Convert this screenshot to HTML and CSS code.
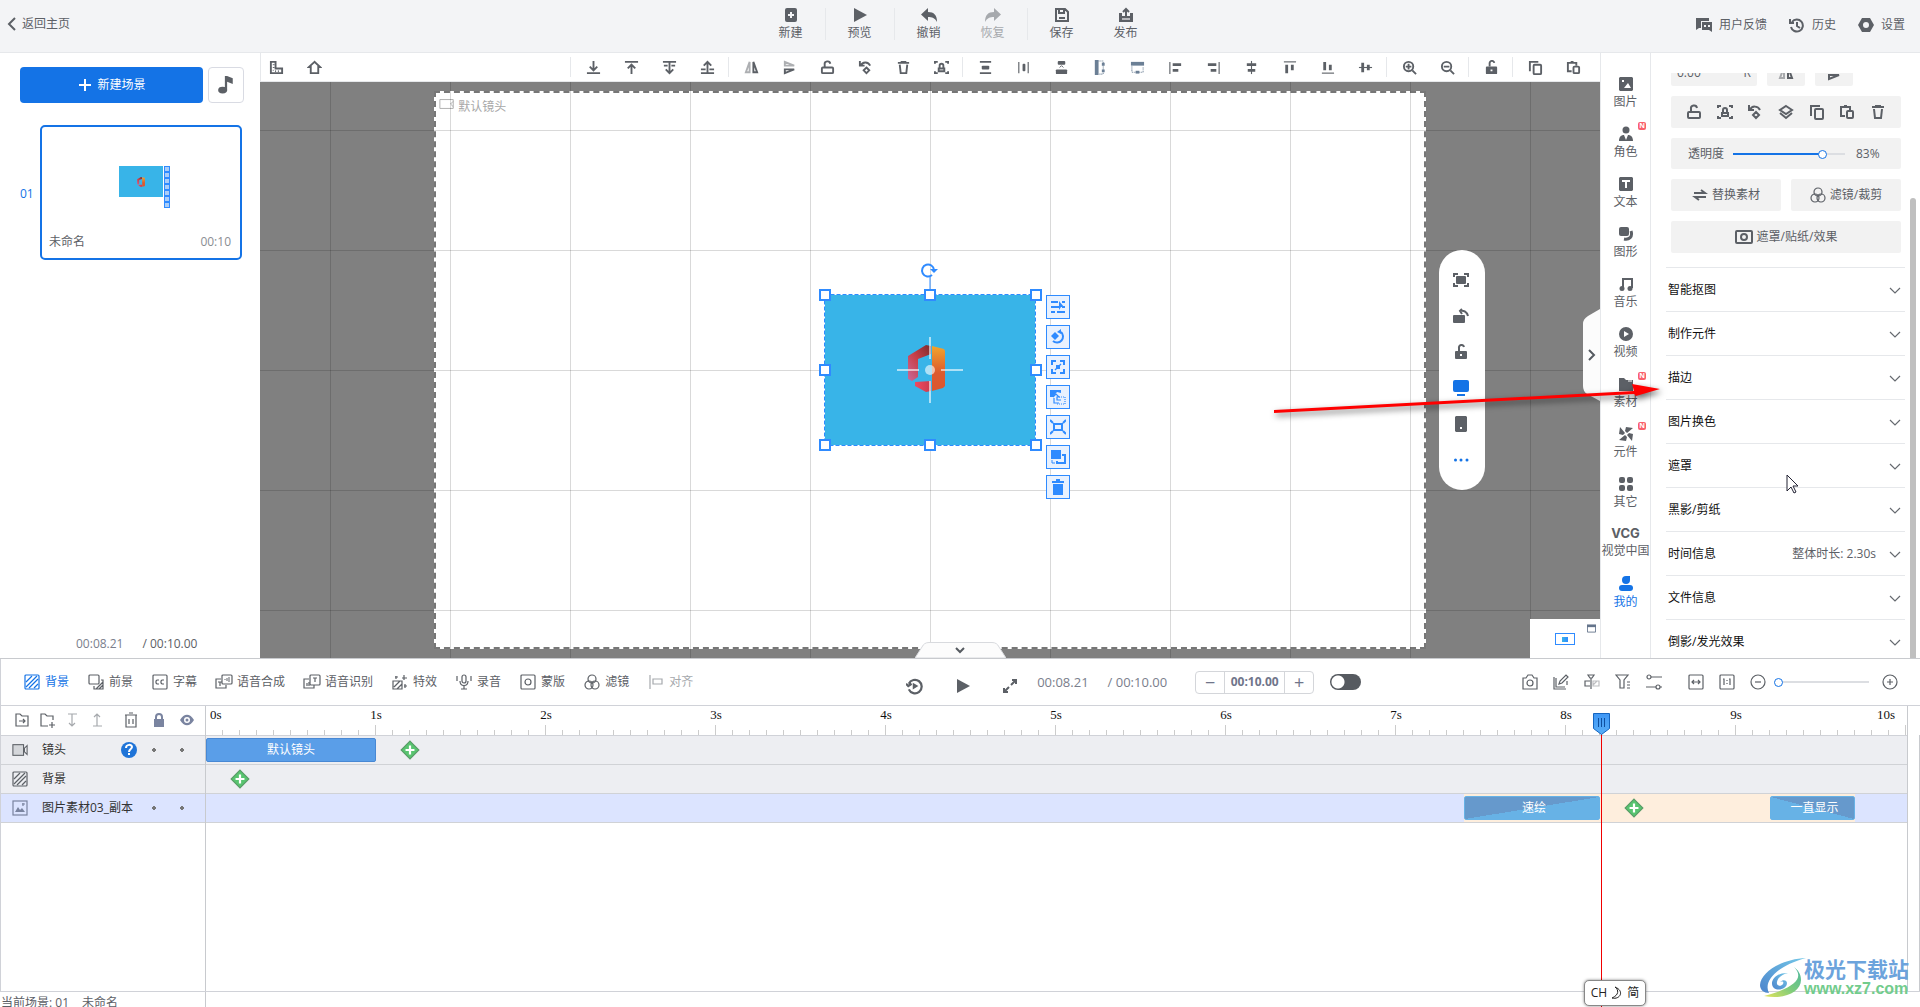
FILE: index.html
```html
<!DOCTYPE html>
<html lang="zh-CN">
<head>
<meta charset="utf-8">
<title>未命名</title>
<link rel="stylesheet" href="styles.css">
</head>
<body>
<svg class="sprite" aria-hidden="true">
<defs>
<linearGradient id="g-red" x1="1" y1="0" x2="0" y2="1"><stop offset="0" stop-color="#7a2a2c"/><stop offset=".5" stop-color="#c93f48"/><stop offset="1" stop-color="#c86a9c"/></linearGradient>
<linearGradient id="g-orange" x1="0" y1="0" x2="0" y2="1"><stop offset="0" stop-color="#f2a52c"/><stop offset=".6" stop-color="#dc5a2e"/><stop offset="1" stop-color="#dc562e"/></linearGradient>
<linearGradient id="g-pink" x1="0" y1="0" x2="1" y2="0"><stop offset="0" stop-color="#ee4a62"/><stop offset="1" stop-color="#cc3a4c"/></linearGradient>
<linearGradient id="g-sky" x1="1" y1="0" x2="0" y2="1"><stop offset="0" stop-color="#74c8e8"/><stop offset="1" stop-color="#4c84cc"/></linearGradient>
<linearGradient id="g-leaf" x1="1" y1="0" x2="0" y2="1"><stop offset="0" stop-color="#4cb8a0"/><stop offset=".5" stop-color="#7ccb7c"/><stop offset="1" stop-color="#e4e45c"/></linearGradient>
<linearGradient id="g-head" x1="0" y1="0" x2="0" y2="1"><stop offset="0" stop-color="#3f97f5"/><stop offset="1" stop-color="#58aef8"/></linearGradient>
</defs>
<symbol id="back" viewBox="0 0 16 16"><path d="M11 2L5 8l6 6" stroke-width="2"/></symbol>
<symbol id="new" viewBox="0 0 16 16"><path fill="currentColor" stroke="none" fill-rule="evenodd" d="M4 1h8a2 2 0 0 1 2 2v10a2 2 0 0 1-2 2H4a2 2 0 0 1-2-2V3a2 2 0 0 1 2-2zm3 4v2H5v2h2v2h2V9h2V7H9V5z"/></symbol>
<symbol id="play" viewBox="0 0 16 16"><path fill="currentColor" stroke="none" d="M2 1l13 7-13 7z"/></symbol>
<symbol id="undo" viewBox="0 0 16 16"><path fill="currentColor" stroke="none" d="M7 1v4c6 0 9 3 9 10-2-4-5-5-9-5v4L0 7.500z"/></symbol>
<symbol id="redo" viewBox="0 0 16 16"><path fill="currentColor" stroke="none" d="M9 1v4c-6 0-9 3-9 10 2-4 5-5 9-5v4l7-6.500z"/></symbol>
<symbol id="save" viewBox="0 0 16 16"><path d="M2 2h9l3 3v9H2zM5 2v4h5V2M5 11h6" stroke-width="2"/></symbol>
<symbol id="publish" viewBox="0 0 16 16"><path fill="currentColor" stroke="none" d="M1 6h3v3h8V6h3v9H1z"/><path d="M8 10V2M5 5l3-3 3 3" stroke-width="2"/><path d="M4 12h8" stroke="#f3f4f6"/></symbol>
<symbol id="feedback" viewBox="0 0 16 16"><path fill="currentColor" stroke="none" d="M0 1h13v3H5v7H3l-3 2z"/><path fill="currentColor" stroke="none" fill-rule="evenodd" d="M6 5h10v10l-3-2H6zm2 3v2h2V8zm4 0v2h2V8z"/></symbol>
<symbol id="history" viewBox="0 0 16 16"><path d="M3 5a6 6 0 1 1-1 5M8 5v4l3 2M1 2v4h4" stroke-width="2"/></symbol>
<symbol id="gear" viewBox="0 0 16 16"><path fill="currentColor" stroke="none" fill-rule="evenodd" d="M4 1h8l4 7-4 7H4L0 8zm4 4a3 3 0 1 0 0 6 3 3 0 0 0 0-6z"/></symbol>
<symbol id="plus" viewBox="0 0 16 16"><path d="M8 2v12M2 8h12" stroke-width="2"/></symbol>
<symbol id="note" viewBox="0 0 16 16"><ellipse cx="5" cy="12.500" rx="4" ry="3" fill="currentColor" stroke="none"/><path fill="currentColor" stroke="none" d="M7 0h2l5 2v5L9 5v8H7z"/></symbol>
<symbol id="ruler" viewBox="0 0 16 16"><path d="M2 2h5v7h7v5H2z" stroke-width="2"/><path d="M4 5h2M4 8h2M7 11v2M10 11v2M4 11h1" stroke-width="1"/></symbol>
<symbol id="home" viewBox="0 0 16 16"><path d="M8 2L2 7.500h2V14h8V7.500h2z" stroke-width="2"/></symbol>
<symbol id="to-bottom" viewBox="0 0 16 16"><path d="M8 1v9M4 7l4 4 4-4M1 14h14" stroke-width="2"/></symbol>
<symbol id="to-top" viewBox="0 0 16 16"><path d="M8 15V6M4 9l4-4 4 4M1 2h14" stroke-width="2"/></symbol>
<symbol id="down-one" viewBox="0 0 16 16"><path d="M8 3v10M4 10l4 4 4-4M1 2h14M2 6h4M10 6h4" stroke-width="2"/></symbol>
<symbol id="up-one" viewBox="0 0 16 16"><path d="M8 13V3M4 6l4-4 4 4M1 14h14M1 10h5M10 10h5" stroke-width="2"/></symbol>
<symbol id="flip-h" viewBox="0 0 16 16"><path d="M6 2v11H2z" opacity=".5" stroke-width="2"/><path d="M10 2v11h4z" stroke-width="2"/></symbol>
<symbol id="flip-v" viewBox="0 0 16 16"><path d="M3 6V2l10 4z" opacity=".5" stroke-width="2"/><path d="M3 10v4l10-4z" stroke-width="2"/></symbol>
<symbol id="unlock" viewBox="0 0 16 16"><rect x="2" y="8" width="12" height="6" rx="1" stroke-width="2"/><path d="M5 8V5a3 3 0 0 1 6-1" stroke-width="2"/></symbol>
<symbol id="unlock-fill" viewBox="0 0 16 16"><path fill="currentColor" stroke="none" fill-rule="evenodd" d="M3 7h10a1 1 0 0 1 1 1v6a1 1 0 0 1-1 1H3a1 1 0 0 1-1-1V8a1 1 0 0 1 1-1zm4 3v2h2v-2z"/><path d="M6 7V4a2.500 2.500 0 0 1 5-1" stroke-width="2"/></symbol>
<symbol id="rotate" viewBox="0 0 16 16"><path d="M3 6c2-5 8-4 10 0M2 1v5h5M9 8l3 3-3 3-3-3z" stroke-width="2"/></symbol>
<symbol id="trash" viewBox="0 0 16 16"><path d="M2 3h12M5 2h6M4 5l1 9h6l1-9" stroke-width="2"/></symbol>
<symbol id="lock-frame" viewBox="0 0 16 16"><path d="M1 4V2h3M12 2h3v2M1 12v2h3M15 12v2h-3M5 12V9h6v3zM6 8V6a2 2 0 0 1 4 0v2" stroke-width="2"/></symbol>
<symbol id="gap-v" viewBox="0 0 16 16"><path d="M2 2h12M2 14h12" stroke-width="2"/><rect x="4" y="6" width="8" height="4" rx="1" fill="currentColor" stroke="none"/></symbol>
<symbol id="gap-h" viewBox="0 0 16 16"><path d="M3 2v12M13 2v12"/><rect x="7" y="4" width="3" height="8" rx="1" fill="currentColor" stroke="none"/></symbol>
<symbol id="stack" viewBox="0 0 16 16"><rect x="4" y="1" width="8" height="4" rx="1" fill="currentColor" stroke="none"/><rect x="2" y="10" width="12" height="5" rx="1" fill="currentColor" stroke="none"/><path d="M6 8l2-2 2 2" stroke-width="1"/></symbol>
<symbol id="col-fit" viewBox="0 0 16 16"><path d="M3 0h4v16H3z" fill="#6b7f95" stroke="none"/><path d="M7 1h5v14H7" stroke="#6b7f95" stroke-dasharray="1 1"/><path d="M12 3v3M12 10v3" stroke="#6b7f95" stroke-width="3"/></symbol>
<symbol id="row-fit" viewBox="0 0 16 16"><path d="M1 2h14v4H1z" fill="#6b7f95" stroke="none"/><path d="M2 7v6h12V7" stroke="#6b7f95" stroke-dasharray="1 1"/><path d="M6 13h4" stroke="#6b7f95" stroke-width="3"/></symbol>
<symbol id="al-left" viewBox="0 0 16 16"><path d="M2 2v13"/><path d="M5 5h9M5 11h6" stroke-width="3"/></symbol>
<symbol id="al-right" viewBox="0 0 16 16"><path d="M14 2v13"/><path d="M2 5h9M5 11h6" stroke-width="3"/></symbol>
<symbol id="al-center" viewBox="0 0 16 16"><path d="M8 1v14"/><path d="M3 5h10M4 11h8" stroke-width="3"/></symbol>
<symbol id="al-top" viewBox="0 0 16 16"><path d="M2 2h13"/><path d="M5 5v9M11 5v6" stroke-width="3"/></symbol>
<symbol id="al-bottom" viewBox="0 0 16 16"><path d="M2 14h13"/><path d="M5 2v9M11 5v6" stroke-width="3"/></symbol>
<symbol id="al-middle" viewBox="0 0 16 16"><path d="M1 8h14"/><path d="M5 3v10M11 5v6" stroke-width="3"/></symbol>
<symbol id="zoom-in" viewBox="0 0 16 16"><circle cx="7" cy="7" r="5" stroke-width="2"/><path d="M11 11l4 4M4 7h6M7 4v6" stroke-width="2"/></symbol>
<symbol id="zoom-out" viewBox="0 0 16 16"><circle cx="7" cy="7" r="5" stroke-width="2"/><path d="M11 11l4 4M4 7h6" stroke-width="2"/></symbol>
<symbol id="copy" viewBox="0 0 16 16"><rect x="6" y="5" width="8" height="10" rx="1" stroke-width="2"/><path d="M2 12V2h9" stroke-width="2"/></symbol>
<symbol id="paste" viewBox="0 0 16 16"><path d="M6 12H2V3h9v3M5 2h3" stroke-width="2"/><rect x="8" y="7" width="6" height="7" rx="1" stroke-width="2"/></symbol>
<symbol id="layers" viewBox="0 0 16 16"><path d="M8 2l6 4-6 4-6-4zM2 9l6 5 6-5" stroke-width="2"/></symbol>
<symbol id="swap" viewBox="0 0 16 16"><path d="M2 6h11L9 3M14 10H3l4 3" stroke-width="2"/></symbol>
<symbol id="filter" viewBox="0 0 16 16"><circle cx="8" cy="5" r="4"/><circle cx="5" cy="11" r="4"/><circle cx="11" cy="11" r="4"/></symbol>
<symbol id="mask" viewBox="0 0 18 16"><rect x="1" y="2" width="16" height="12" rx="1" stroke-width="2"/><circle cx="9" cy="8" r="3" stroke-width="2"/></symbol>
<symbol id="chev-down" viewBox="0 0 16 16"><path d="M3 6l5 5 5-5"/></symbol>
<symbol id="picture" viewBox="0 0 16 16"><path fill="currentColor" stroke="none" fill-rule="evenodd" d="M2 1h12l1 1v12l-1 1H2l-1-1V2zm2 3v2h2V4zm2 8h7L10 7z"/></symbol>
<symbol id="person" viewBox="0 0 16 16"><circle cx="8" cy="4" r="3.500" fill="currentColor" stroke="none"/><path fill="currentColor" stroke="none" d="M1 15c0-4 2-6 5-6l2 5 2-5c3 0 5 2 5 6z"/></symbol>
<symbol id="text" viewBox="0 0 16 16"><path fill="currentColor" stroke="none" fill-rule="evenodd" d="M2 1h12l1 1v12l-1 1H2l-1-1V2zm2 3v2h3v6h2V6h3V4z"/></symbol>
<symbol id="shape" viewBox="0 0 16 16"><rect x="1" y="1" width="10" height="9" rx="2" fill="currentColor" stroke="none"/><path d="M13 5c2 6-2 9-7 8" stroke-width="3"/></symbol>
<symbol id="music" viewBox="0 0 16 16"><path d="M5 12V3h9v9M5 3h9" stroke-width="2"/><circle cx="4" cy="12.500" r="2.500" fill="currentColor" stroke="none"/><circle cx="12" cy="12.500" r="2.500" fill="currentColor" stroke="none"/></symbol>
<symbol id="video" viewBox="0 0 16 16"><path fill="currentColor" stroke="none" fill-rule="evenodd" d="M8 1a7 7 0 1 0 0 14A7 7 0 0 0 8 1zM6 5l5 3-5 3z"/></symbol>
<symbol id="folder" viewBox="0 0 16 16"><path fill="currentColor" stroke="none" d="M1 2h5l2 2h7v11H1z"/><path d="M10 5h4" stroke="#fff" stroke-width="1"/></symbol>
<symbol id="pinwheel" viewBox="0 0 16 16"><path fill="currentColor" stroke="none" d="M7 7L2 1 1 8l4 1zM9 7l6-5-7-1-1 4zM9 9l5 6 1-7-4-1zM7 9l-6 5 7 1 1-4z"/></symbol>
<symbol id="dots4" viewBox="0 0 16 16"><g fill="currentColor" stroke="none"><rect x="1" y="1" width="6" height="6" rx="2"/><rect x="9" y="1" width="6" height="6" rx="2"/><rect x="1" y="9" width="6" height="6" rx="2"/><rect x="9" y="9" width="6" height="6" rx="2"/></g></symbol>
<symbol id="mine" viewBox="0 0 16 16"><path fill="currentColor" stroke="none" d="M8 0h4v4a4 4 0 1 1-4-4z"/><rect x="1" y="9" width="14" height="6" rx="3" fill="currentColor" stroke="none"/></symbol>
<symbol id="frame" viewBox="0 0 16 16"><path d="M1 5V2h4M11 2h4v3M1 11v3h4M15 11v3h-4" stroke-width="2"/><rect x="3" y="4" width="10" height="8" rx="1" fill="currentColor" stroke="none"/></symbol>
<symbol id="turn" viewBox="0 0 16 16"><rect x="0" y="7" width="12" height="8" rx="1" fill="currentColor" stroke="none"/><path d="M7 3c4-1 7 1 8 5M9 1L7 3l2 3" stroke-width="2"/></symbol>
<symbol id="screen" viewBox="0 0 16 16"><rect y="0" width="16" height="12" rx="2" fill="currentColor" stroke="none"/><path d="M4 15h8" stroke-width="2"/></symbol>
<symbol id="phone" viewBox="0 0 16 16"><path fill="currentColor" stroke="none" fill-rule="evenodd" d="M3 0h10l1 1v14l-1 1H3l-1-1V1zm4 11v2h2v-2z"/></symbol>
<symbol id="more" viewBox="0 0 16 16"><g fill="currentColor" stroke="none"><circle cx="2.500" cy="8" r="1.500"/><circle cx="8" cy="8" r="1.500"/><circle cx="14" cy="8" r="1.500"/></g></symbol>
<symbol id="h-list" viewBox="0 0 16 16"><path d="M1 3h7M1 8h8M1 13h4M7 13h8M12 3h3M12 8h3" stroke-width="2"/><path fill="currentColor" stroke="none" d="M9 2l5 6-3 0-2 3z"/></symbol>
<symbol id="h-rot" viewBox="0 0 16 16"><path fill="currentColor" stroke="none" d="M5 3l4 4-4 4-4-4zM7 3l4-3v5z"/><path d="M11 3a6 6 0 1 1-8 9" stroke-width="2"/></symbol>
<symbol id="h-scale" viewBox="0 0 16 16"><path d="M2 6V2h4M14 10v4h-4M2 10v4h4M10 2h4v4" stroke-width="2"/><path d="M5 11l6-6"/><path fill="currentColor" stroke="none" d="M6 6h4v4H6z"/></symbol>
<symbol id="h-move" viewBox="0 0 16 16"><path fill="currentColor" stroke="none" d="M0 1h11v3L7 3 3 8H0z"/><path d="M4 9v5h5M3 8l3-3 3 3H7v3h4"/><path d="M9 8h6v7H7" stroke-dasharray="1 1"/></symbol>
<symbol id="h-fit" viewBox="0 0 16 16"><rect x="4" y="5" width="8" height="6" stroke-width="2"/><path d="M0 1l3 3M16 1l-3 3M0 15l3-3M16 15l-3-3" stroke-width="2"/></symbol>
<symbol id="h-dup" viewBox="0 0 16 16"><path fill="currentColor" stroke="none" d="M1 1h10v9H1z"/><path d="M7 12v2h8V6h-3" stroke-width="2"/><path d="M2 11v3h3" stroke-width="1"/></symbol>
<symbol id="h-del" viewBox="0 0 16 16"><path fill="currentColor" stroke="none" d="M2 2h4V0h4v2h4v2H2zM3 5h10v11H3z"/></symbol>
<symbol id="hatch" viewBox="0 0 16 16"><rect x="1" y="1" width="14" height="14" rx="1"/><path d="M2 8l6-6M2 13L13 2M5 14l9-9M10 14l4-4"/></symbol>
<symbol id="front" viewBox="0 0 16 16"><rect x="1" y="1" width="10" height="9" rx="1"/><path d="M13 6h2v9H6v-3M8 15l7-7M11 15l4-4"/></symbol>
<symbol id="cc" viewBox="0 0 16 16"><rect x="1" y="1" width="14" height="14" rx="1"/><path d="M7 6H5L4 7v2l1 1h2M12 6h-2L9 7v2l1 1h2"/></symbol>
<symbol id="tts" viewBox="0 0 18 16"><path d="M6 5H1v9h10v-3M3 8h4M5 8v4"/><rect x="7" y="1" width="10" height="9" rx="1"/><path d="M10 5v1M12 4v3M14 3v5" stroke-width="1"/></symbol>
<symbol id="asr" viewBox="0 0 18 16"><path d="M6 5H1v9h10v-3M4 9v3M6 8v4"/><rect x="7" y="1" width="10" height="10" rx="1"/><path d="M10 4h4M12 4v4"/></symbol>
<symbol id="fx" viewBox="0 0 16 16"><path d="M1 7h9v8H1zM2 13l6-6M5 15l5-5M4 2v3M3 3h3M12 1v5M10 4h5M13 10v4M12 12h3"/></symbol>
<symbol id="mic" viewBox="0 0 16 16"><rect x="6" y="1" width="4" height="8" rx="2"/><path d="M4 7c0 6 8 6 8 0M8 12v3M5 15h6M1 2v5M15 2v5"/></symbol>
<symbol id="mask2" viewBox="0 0 16 16"><rect x="1" y="1" width="14" height="14" rx="1"/><circle cx="8" cy="8" r="3"/></symbol>
<symbol id="align" viewBox="0 0 16 16"><path d="M2 1v14M5 5h9v5H5z"/></symbol>
<symbol id="replay" viewBox="0 0 16 16"><path d="M2.500 6a6 6 0 1 1 0 5M0 6l2 2 3-2" stroke-width="2"/><path fill="currentColor" stroke="none" d="M6 5l5 3-5 3z"/></symbol>
<symbol id="expand" viewBox="0 0 16 16"><path d="M9 7l5-5M2 14l5-5M10 2h4v4M2 10v4h4" stroke-width="2"/></symbol>
<symbol id="camera" viewBox="0 0 16 16"><path d="M1 4h3l2-3h4l2 3h3v11H1z"/><circle cx="8" cy="9" r="3"/></symbol>
<symbol id="edit" viewBox="0 0 16 16"><path d="M3 4v9h9M1 3v12h12M6 10l1-3 6-6 2 2-6 6zM14 7v4"/></symbol>
<symbol id="cut" viewBox="0 0 16 16"><path d="M7 4v11M4 1h6L8 4H6zM6 7H1v5h5"/><path d="M9 7h6v5H9zM9 11l4-4" opacity=".4"/></symbol>
<symbol id="funnel" viewBox="0 0 16 16"><path d="M1 1h12L9 6v8H5V6zM12 8h3M12 11h3M12 14h3"/></symbol>
<symbol id="sliders" viewBox="0 0 16 16"><circle cx="3" cy="3" r="2"/><circle cx="12" cy="13" r="2"/><path d="M5 3h11M0 13h10M14 13h2"/></symbol>
<symbol id="fit-w" viewBox="0 0 16 16"><rect x="1" y="1" width="14" height="14" rx="1"/><path d="M4 8h8M6 6L4 8l2 2M10 6l2 2-2 2"/></symbol>
<symbol id="one" viewBox="0 0 16 16"><rect x="1" y="1" width="14" height="14" rx="1"/><path d="M4 5h1v6M10 5h1v6M8 6v1M8 9v1"/></symbol>
<symbol id="minus-c" viewBox="0 0 16 16"><circle cx="8" cy="8" r="7"/><path d="M5 8h6"/></symbol>
<symbol id="plus-c" viewBox="0 0 16 16"><circle cx="8" cy="8" r="7"/><path d="M5 8h6M8 5v6"/></symbol>
<symbol id="fold-in" viewBox="0 0 16 16"><path d="M2 14V2h4l2 2h6v10zM5 9h6M9 7l2 2-2 2"/></symbol>
<symbol id="fold-add" viewBox="0 0 16 16"><path d="M9 14H2V2h4l2 2h6v4M13 10v6M10 13h6"/></symbol>
<symbol id="t-down" viewBox="0 0 16 16"><path d="M4 2h9M8 2v12M5 11l3 3 3-3"/></symbol>
<symbol id="t-up" viewBox="0 0 16 16"><path d="M4 14h9M8 14V2M5 5l3-3 3 3"/></symbol>
<symbol id="bin" viewBox="0 0 16 16"><path d="M2 3h12M6 1h4M3 3v12h10V3M6 7v5M10 7v5"/></symbol>
<symbol id="lock" viewBox="0 0 16 16"><path fill="currentColor" stroke="none" d="M3 7h10v8H3z"/><path d="M5 8V5a3 3 0 0 1 6 0v3" stroke-width="2"/></symbol>
<symbol id="eye" viewBox="0 0 16 16"><path fill="currentColor" stroke="none" fill-rule="evenodd" d="M1 8c4-7 10-7 14 0-4 7-10 7-14 0zm7-3a3 3 0 1 0 0 6 3 3 0 0 0 0-6z"/><circle cx="8" cy="8" r="1.500" fill="currentColor" stroke="none"/></symbol>
<symbol id="cam" viewBox="0 0 18 16"><rect x="1" y="2" width="12" height="12" fill="#d4d6da"/><path d="M17 3l-3 3v4l3 3z"/></symbol>
<symbol id="img" viewBox="0 0 16 16"><rect x="1" y="1" width="14" height="14"/><path fill="currentColor" stroke="none" d="M3 12l3-5 2 3 2-2 3 4z"/><path d="M11 3v3M10 4h3"/></symbol>
<symbol id="key" viewBox="0 0 18 18"><path d="M9 1l8 8-8 8-8-8z" fill="#58c470" stroke="#5a9c68"/><path d="M9 5v8M5 9h8" stroke="#fff" stroke-width="2"/></symbol>
<symbol id="help" viewBox="0 0 16 16"><circle cx="8" cy="8" r="8" fill="#1f74d8" stroke="none"/><path d="M5 6c0-4 6-4 6-1 0 2-3 2-3 5M8 11v2" stroke="#fff" stroke-width="2"/></symbol>
<symbol id="office" viewBox="0 0 37 47"><g stroke="none"><path d="M18 0l5 1v8l-13 5v18l-6 4-4-2V11z" fill="url(#g-red)"/><path d="M24 1l12 3 1 2v35l-2 2-11 3z" fill="url(#g-orange)"/><path d="M7 37l16-1v10l-5 1-11-6z" fill="url(#g-pink)"/></g></symbol>
</svg>

<header class="topbar">
  <a class="home-link" href="#"><svg class="i"><use href="#back"/></svg>返回主页</a>
  <nav class="actions">
    <button><svg class="i"><use href="#new"/></svg>新建</button><i class="vr"></i>
    <button><svg class="i"><use href="#play"/></svg>预览</button><i class="vr"></i>
    <button><svg class="i"><use href="#undo"/></svg>撤销</button>
    <button disabled><svg class="i"><use href="#redo"/></svg>恢复</button><i class="vr"></i>
    <button><svg class="i"><use href="#save"/></svg>保存</button>
    <button><svg class="i"><use href="#publish"/></svg>发布</button>
  </nav>
  <div class="account">
    <button><svg class="i"><use href="#feedback"/></svg>用户反馈</button>
    <button><svg class="i"><use href="#history"/></svg>历史</button>
    <button><svg class="i"><use href="#gear"/></svg>设置</button>
  </div>
</header>

<main class="workspace">
  <aside class="scenes">
    <div class="scene-add">
      <button class="primary"><svg class="i"><use href="#plus"/></svg>新建场景</button>
      <button class="music-btn" aria-label="音乐"><svg class="i"><use href="#note"/></svg></button>
    </div>
    <div class="scene">
      <span class="scene-no">01</span>
      <div class="card">
        <div class="thumb">
          <span class="thumb-obj"><svg class="thumb-logo"><use href="#office"/></svg></span>
          <span class="thumb-tools"><i></i><i></i><i></i><i></i><i></i><i></i><i></i></span>
        </div>
        <div class="caption"><span>未命名</span><time>00:10</time></div>
      </div>
    </div>
    <p class="scene-time"><span>00:08.21</span><span>/ 00:10.00</span></p>
  </aside>

  <section class="editor">
    <div class="tools">
      <div class="tools-left">
        <button aria-label="标尺"><svg class="i"><use href="#ruler"/></svg></button>
        <button aria-label="主页"><svg class="i"><use href="#home"/></svg></button>
      </div>
      <div class="tools-main">
        <i class="vr"></i>
        <button aria-label="置底"><svg class="i"><use href="#to-bottom"/></svg></button>
        <button aria-label="置顶"><svg class="i"><use href="#to-top"/></svg></button>
        <button aria-label="下移"><svg class="i"><use href="#down-one"/></svg></button>
        <button aria-label="上移"><svg class="i"><use href="#up-one"/></svg></button>
        <i class="vr"></i>
        <button aria-label="水平翻转"><svg class="i"><use href="#flip-h"/></svg></button>
        <button aria-label="垂直翻转"><svg class="i"><use href="#flip-v"/></svg></button>
        <button aria-label="解锁"><svg class="i"><use href="#unlock"/></svg></button>
        <button aria-label="旋转"><svg class="i"><use href="#rotate"/></svg></button>
        <button aria-label="删除"><svg class="i"><use href="#trash"/></svg></button>
        <button aria-label="锁定"><svg class="i"><use href="#lock-frame"/></svg></button>
        <i class="vr"></i>
        <button aria-label="垂直间距"><svg class="i"><use href="#gap-v"/></svg></button>
        <button aria-label="水平间距"><svg class="i"><use href="#gap-h"/></svg></button>
        <button aria-label="堆叠"><svg class="i"><use href="#stack"/></svg></button>
        <button aria-label="等高"><svg class="i"><use href="#col-fit"/></svg></button>
        <button aria-label="等宽"><svg class="i"><use href="#row-fit"/></svg></button>
        <button aria-label="左对齐"><svg class="i"><use href="#al-left"/></svg></button>
        <button aria-label="右对齐"><svg class="i"><use href="#al-right"/></svg></button>
        <button aria-label="居中"><svg class="i"><use href="#al-center"/></svg></button>
        <button aria-label="顶对齐"><svg class="i"><use href="#al-top"/></svg></button>
        <button aria-label="底对齐"><svg class="i"><use href="#al-bottom"/></svg></button>
        <button aria-label="中部对齐"><svg class="i"><use href="#al-middle"/></svg></button>
        <i class="vr"></i>
        <button aria-label="放大"><svg class="i"><use href="#zoom-in"/></svg></button>
        <button aria-label="缩小"><svg class="i"><use href="#zoom-out"/></svg></button>
        <i class="vr"></i>
        <button aria-label="解锁全部"><svg class="i"><use href="#unlock-fill"/></svg></button>
        <i class="vr"></i>
        <button aria-label="复制"><svg class="i"><use href="#copy"/></svg></button>
        <button aria-label="粘贴"><svg class="i"><use href="#paste"/></svg></button>
      </div>
    </div>
    <div class="canvas">
      <div class="stage"><svg class="i" viewBox="0 0 18 16"><path d="M1 3h15v10H1zM16 5l-3 3 3 3" stroke-width="1"/></svg>默认镜头</div>
      <div class="grid-lines"></div>
      <div class="object">
        <svg class="object-logo"><use href="#office"/></svg>
        <svg class="overlay" viewBox="0 0 231 190">
          <g fill="none" stroke="#fff" stroke-width="2" opacity=".6"><path d="M83 115h22M127 115h22M116 82v22M116 126v22"/></g>
          <circle cx="116" cy="115" r="5" fill="#fff" opacity=".6"/>
          <path d="M116 22v12" stroke="#2f8bff" stroke-width="1"/>
          <path d="M118 20a6 6 0 1 1 2-5" fill="none" stroke="#2f8bff" stroke-width="2"/><path d="M116 14h8l-4 4z" fill="#2f8bff"/>
          <rect x="10.500" y="39.500" width="211" height="151" fill="none" stroke="#fff"/>
          <rect x="10.500" y="39.500" width="211" height="151" fill="none" stroke="#2f8bff" stroke-dasharray="4 2"/>
          <g fill="#fff" stroke="#2f8bff" stroke-width="2"><rect x="6" y="35" width="10" height="10"/><rect x="111" y="35" width="10" height="10"/><rect x="217" y="35" width="10" height="10"/><rect x="6" y="110" width="10" height="10"/><rect x="217" y="110" width="10" height="10"/><rect x="6" y="185" width="10" height="10"/><rect x="111" y="185" width="10" height="10"/><rect x="217" y="185" width="10" height="10"/></g>
        </svg>
        <div class="object-tools">
          <button aria-label="选择"><svg class="i"><use href="#h-list"/></svg></button>
          <button aria-label="旋转"><svg class="i"><use href="#h-rot"/></svg></button>
          <button aria-label="缩放"><svg class="i"><use href="#h-scale"/></svg></button>
          <button aria-label="移动"><svg class="i"><use href="#h-move"/></svg></button>
          <button aria-label="适应"><svg class="i"><use href="#h-fit"/></svg></button>
          <button aria-label="复制"><svg class="i"><use href="#h-dup"/></svg></button>
          <button aria-label="删除"><svg class="i"><use href="#h-del"/></svg></button>
        </div>
      </div>
      <div class="pill">
        <button aria-label="适应窗口"><svg class="i"><use href="#frame"/></svg></button>
        <button aria-label="转向"><svg class="i"><use href="#turn"/></svg></button>
        <button aria-label="锁"><svg class="i"><use href="#unlock-fill"/></svg></button>
        <button class="on" aria-label="横屏"><svg class="i"><use href="#screen"/></svg></button>
        <button aria-label="竖屏"><svg class="i"><use href="#phone"/></svg></button>
        <button class="on" aria-label="更多"><svg class="i"><use href="#more"/></svg></button>
      </div>
      <button class="side-tab" aria-label="收起"><svg viewBox="0 0 17 92"><path d="M17 0L5 7Q0 10 0 15V77Q0 82 4 85L17 92z" fill="#fcfcfc"/><path d="M6 41l5 5-5 5" fill="none" stroke="#555a60" stroke-width="2"/></svg></button>
      <div class="minimap"><span></span><svg viewBox="0 0 10 9"><path d="M.5 1.500h9v7h-9z" fill="none" stroke="#64748b"/><path d="M0 0h10v3H0z" fill="#64748b"/></svg></div>
      <button class="fold-tab" aria-label="折叠"><svg viewBox="0 0 91 16"><path d="M0 16L7 5Q9 .5 14 .5H77Q82 .5 84 5L91 16z" fill="#fcfcfc" stroke="#d8dade"/><path d="M41 6l4 4 4-4" fill="none" stroke="#555a60" stroke-width="2"/></svg></button>
    </div>
  </section>

  <nav class="library">
    <a href="#"><svg class="i"><use href="#picture"/></svg>图片</a>
    <a href="#"><svg class="i"><use href="#person"/></svg>角色<b>N</b></a>
    <a href="#"><svg class="i"><use href="#text"/></svg>文本</a>
    <a href="#"><svg class="i"><use href="#shape"/></svg>图形</a>
    <a href="#"><svg class="i"><use href="#music"/></svg>音乐</a>
    <a href="#"><svg class="i"><use href="#video"/></svg>视频</a>
    <a href="#"><svg class="i"><use href="#folder"/></svg>素材<b>N</b></a>
    <a href="#"><svg class="i"><use href="#pinwheel"/></svg>元件<b>N</b></a>
    <a href="#"><svg class="i"><use href="#dots4"/></svg>其它</a>
    <a href="#"><strong>VCG</strong>视觉中国</a>
    <a href="#" class="on"><svg class="i"><use href="#mine"/></svg>我的</a>
  </nav>

  <aside class="props">
    <div class="props-body">
      <div class="row first">
        <div class="box num"><span>0.00</span><span>R</span></div>
        <button class="box mini" aria-label="水平翻转"><svg class="i"><use href="#flip-h"/></svg></button>
        <button class="box mini" aria-label="垂直翻转"><svg class="i"><use href="#flip-v"/></svg></button>
      </div>
      <div class="row box quick">
        <button aria-label="解锁"><svg class="i"><use href="#unlock"/></svg></button>
        <button aria-label="锁定"><svg class="i"><use href="#lock-frame"/></svg></button>
        <button aria-label="旋转"><svg class="i"><use href="#rotate"/></svg></button>
        <button aria-label="图层"><svg class="i"><use href="#layers"/></svg></button>
        <button aria-label="复制"><svg class="i"><use href="#copy"/></svg></button>
        <button aria-label="粘贴"><svg class="i"><use href="#paste"/></svg></button>
        <button aria-label="删除"><svg class="i"><use href="#trash"/></svg></button>
      </div>
      <div class="row box opacity"><label for="opacity">透明度</label><input id="opacity" type="range" min="0" max="100" value="83"><output>83%</output></div>
      <div class="row">
        <button class="box wide"><svg class="i"><use href="#swap"/></svg>替换素材</button>
        <button class="box wide"><svg class="i"><use href="#filter"/></svg>滤镜/裁剪</button>
      </div>
      <div class="row"><button class="box wide"><svg class="i big"><use href="#mask"/></svg>遮罩/贴纸/效果</button></div>
      <div class="sections">
        <button>智能抠图<svg class="i"><use href="#chev-down"/></svg></button>
        <button>制作元件<svg class="i"><use href="#chev-down"/></svg></button>
        <button>描边<svg class="i"><use href="#chev-down"/></svg></button>
        <button>图片换色<svg class="i"><use href="#chev-down"/></svg></button>
        <button>遮罩<svg class="i"><use href="#chev-down"/></svg></button>
        <button>黑影/剪纸<svg class="i"><use href="#chev-down"/></svg></button>
        <button>时间信息<span>整体时长: 2.30s</span><svg class="i"><use href="#chev-down"/></svg></button>
        <button>文件信息<svg class="i"><use href="#chev-down"/></svg></button>
        <button>倒影/发光效果<svg class="i"><use href="#chev-down"/></svg></button>
      </div>
    </div>
    <div class="scrollbar"></div>
  </aside>
</main>

<section class="timeline">
  <div class="tl-bar">
    <div class="tl-tabs">
      <button class="on"><svg class="i"><use href="#hatch"/></svg>背景</button>
      <button><svg class="i"><use href="#front"/></svg>前景</button>
      <button><svg class="i"><use href="#cc"/></svg>字幕</button>
      <button><svg class="i"><use href="#tts"/></svg>语音合成</button>
      <button><svg class="i"><use href="#asr"/></svg>语音识别</button>
      <button><svg class="i"><use href="#fx"/></svg>特效</button>
      <button><svg class="i"><use href="#mic"/></svg>录音</button>
      <button><svg class="i"><use href="#mask2"/></svg>蒙版</button>
      <button><svg class="i"><use href="#filter"/></svg>滤镜</button>
      <button disabled><svg class="i"><use href="#align"/></svg>对齐</button>
    </div>
    <div class="transport">
      <button aria-label="重播"><svg class="i"><use href="#replay"/></svg></button>
      <button aria-label="播放"><svg class="i"><use href="#play"/></svg></button>
      <button aria-label="全屏"><svg class="i"><use href="#expand"/></svg></button>
    </div>
    <p class="tl-time"><span>00:08.21</span><span>/ 00:10.00</span></p>
    <div class="stepper"><button aria-label="减少">−</button><input type="text" value="00:10.00" aria-label="时长"><button aria-label="增加">+</button></div>
    <input class="toggle" type="checkbox" aria-label="切换">
    <div class="tl-right">
      <button aria-label="快照"><svg class="i"><use href="#camera"/></svg></button>
      <button aria-label="编辑"><svg class="i"><use href="#edit"/></svg></button>
      <button aria-label="切分"><svg class="i"><use href="#cut"/></svg></button>
      <button aria-label="筛选"><svg class="i"><use href="#funnel"/></svg></button>
      <button aria-label="设置"><svg class="i"><use href="#sliders"/></svg></button>
      <i></i>
      <button aria-label="适应宽度"><svg class="i"><use href="#fit-w"/></svg></button>
      <button aria-label="原始比例"><svg class="i"><use href="#one"/></svg></button>
      <button aria-label="缩小"><svg class="i"><use href="#minus-c"/></svg></button>
      <input type="range" min="0" max="100" value="0" aria-label="时间轴缩放">
      <button aria-label="放大"><svg class="i"><use href="#plus-c"/></svg></button>
    </div>
  </div>
  <div class="tl-body">
    <div class="heads">
      <div class="head-tools">
        <div><button aria-label="移入"><svg class="i"><use href="#fold-in"/></svg></button><button aria-label="新建文件夹"><svg class="i"><use href="#fold-add"/></svg></button><button disabled aria-label="下移"><svg class="i"><use href="#t-down"/></svg></button><button disabled aria-label="上移"><svg class="i"><use href="#t-up"/></svg></button></div>
        <div><button aria-label="删除"><svg class="i"><use href="#bin"/></svg></button><button class="slate" aria-label="锁"><svg class="i"><use href="#lock"/></svg></button><button class="slate" aria-label="显示"><svg class="i"><use href="#eye"/></svg></button></div>
      </div>
      <div class="head"><svg class="i"><use href="#cam"/></svg><span>镜头</span><svg class="i help"><use href="#help"/></svg><em></em><em></em></div>
      <div class="head"><svg class="i"><use href="#hatch"/></svg><span>背景</span></div>
      <div class="head sel"><svg class="i slate"><use href="#img"/></svg><span>图片素材03_副本</span><em></em><em></em></div>
    </div>
    <div class="tracks">
      <ol class="ruler"><li>0s</li><li>1s</li><li>2s</li><li>3s</li><li>4s</li><li>5s</li><li>6s</li><li>7s</li><li>8s</li><li>9s</li><li>10s</li></ol>
      <div class="track"><div class="clip cam" style="grid-column:1/11">默认镜头</div><svg class="key" style="grid-column:12/14"><use href="#key"/></svg></div>
      <div class="track"><svg class="key" style="grid-column:2/4"><use href="#key"/></svg></div>
      <div class="track sel"><div class="range" style="grid-column:75/98"></div><div class="clip in" style="grid-column:75/83">速绘</div><svg class="key" style="grid-column:84/86"><use href="#key"/></svg><div class="clip out" style="grid-column:93/98">一直显示</div></div>
      <div class="playhead" style="--t:8.21"><svg viewBox="0 0 17 22"><path d="M.5.5h16v15l-8 6-8-6z" fill="url(#g-head)" stroke="#1565c0"/><path d="M5.500 5v9M8.500 5v9M11.500 5v9" stroke="#0e4fa0"/></svg></div>
    </div>
    <div class="gutter"></div>
  </div>
  <footer class="status">当前场景: 01<span>未命名</span></footer>
</section>

<svg class="arrow" viewBox="0 0 400 50"><path d="M4 31L364 12 362 5 390 10 366 17 364 15 4 34z" fill="#f00"/></svg>
<svg class="cursor" viewBox="0 0 13 20"><path d="M1 1v16l4-4 3 6 2-1-3-6h5z" fill="#fff" stroke="#223"/></svg>
<div class="ime">CH<svg viewBox="0 0 12 14"><path d="M4 1c4 3 4 8-3 11 8 2 13-7 3-11z" fill="none" stroke="#222"/></svg>简</div>
<div class="watermark">
  <svg viewBox="0 0 46 40"><path d="M46 0C22 1 1 14 0 27c0 5 4 8 9 8C3 24 16 8 46 0z" fill="url(#g-sky)"/><path d="M28 15C17 14 9 23 13 29c4 5 14 2 14-4 0-3-4-4-7-1 3-1 4 0 3 2-2 3-7 2-6-2 1-5 6-8 11-9z" fill="url(#g-sky)"/><path d="M34 9c8 8 8 19-30 29 20 4 37-4 37-16 0-6-3-10-7-13z" fill="url(#g-leaf)"/></svg>
  <div><strong>极光下载站</strong><span>www.xz7.com</span></div>
</div>
</body>
</html>
```

FILE: styles.css
```css
:root {
  --ink: #5c6066;
  --blue: #1473e6;
  --line: #e6e8eb;
  --rule: #d0d2d8;
  --sec: 170px;
}
* { box-sizing: border-box; }
body {
  margin: 0;
  height: 100vh;
  overflow: hidden;
  display: flex;
  flex-direction: column;
  font: 12px/18px "Open Sans", "Noto Sans CJK SC", sans-serif;
  color: var(--ink);
  background: #fff;
}
button, input { font: inherit; color: inherit; margin: 0; padding: 0; border: 0; background: none; }
button { display: flex; align-items: center; justify-content: center; }
a { color: inherit; text-decoration: none; }
p, ol { margin: 0; padding: 0; list-style: none; }
:disabled { color: #a6a9ad; }
.sprite { position: absolute; width: 0; height: 0; }
.i { width: 16px; height: 16px; flex: none; fill: none; stroke: currentColor; stroke-width: 1.2; }
.vr { width: 1px; background: var(--line); flex: none; }

/* top bar */
.topbar {
  flex: none;
  height: 53px;
  display: grid;
  grid-template-columns: 1fr auto 1fr;
  padding: 0 15px 0 11px;
  background: #f3f4f6;
  border-bottom: 1px solid var(--line);
}
.home-link { display: flex; align-items: center; gap: 2px; padding-bottom: 4px; margin-left: -7px; }
.actions { display: flex; padding-top: 6px; }
.actions button { width: 64px; height: 36px; flex-direction: column; gap: 1px; }
.actions .vr { height: 32px; margin: 2px 2px 0; }
.account { display: flex; justify-content: flex-end; align-items: center; gap: 22px; padding-bottom: 3px; }
.account button { gap: 7px; }

.workspace { flex: 1; min-height: 0; display: flex; }

/* scene list */
.scenes { width: 260px; flex: none; display: flex; flex-direction: column; padding: 14px 16px 5px 20px; }
.scene-add { display: flex; gap: 5px; }
.primary { flex: 1; height: 36px; gap: 4px; border-radius: 4px; background: var(--blue); color: #fff; }
.primary .i { stroke-width: 1; }
.music-btn { width: 36px; height: 36px; border: 1px solid #d9dbe3; border-radius: 4px; }
.music-btn .i { width: 18px; height: 18px; }
.scene { display: flex; margin-top: 22px; align-items: center; }
.scene-no { width: 20px; padding-top: 3px; color: var(--blue); }
.card { flex: 1; height: 135px; margin-right: 2px; border: 2px solid var(--blue); border-radius: 5px; display: flex; flex-direction: column; }
.thumb { flex: 1; display: flex; align-items: flex-start; justify-content: center; gap: 1px; padding: 39px 0 0 6px; }
.thumb-obj { width: 44px; height: 31px; display: grid; place-items: center; background: #38b4e8; }
.thumb-logo { width: 8px; height: 10px; }
.thumb-tools { display: grid; width: 6px; }
.thumb-tools i { height: 6px; border: 1px solid #2f8bff; background: #a9cdf8; }
.caption { display: flex; justify-content: space-between; padding: 0 9px 7px 7px; }
.caption time { color: #8a8d92; }
.scene-time { margin-top: auto; display: flex; gap: 19px; padding-left: 56px; }
.scene-time span:first-child { color: #7a7e8c; }

/* editor */
.editor { flex: 1; min-width: 0; display: flex; flex-direction: column; }
.tools { height: 29px; flex: none; display: flex; justify-content: space-between; padding-right: 8px; border-left: 1px solid var(--line); border-bottom: 1px solid var(--line); }
.tools-left { display: flex; gap: 20px; padding-left: 6px; }
.tools-left button { width: 18px; }
.tools-main { display: flex; align-items: center; }
.tools-main button { width: 38px; }
.tools .vr { height: 20px; margin: 0 3px 0 2px; }
.tools .i { width: 15px; height: 15px; }
.canvas { position: relative; flex: 1; min-height: 0; display: grid; place-items: center; background: #808080; overflow: hidden; }
.stage { grid-area: 1/1; width: 74%; height: 97%; display: flex; align-items: flex-start; gap: 3px; padding: 3px; line-height: 22px; color: #a8a8a8; background: #fff; border: 2px dashed #777; }
.grid-lines {
  position: absolute; inset: 0;
  background:
    linear-gradient(to right, rgba(0,0,0,.15) 1px, transparent 1px) calc(50% + 60px) 0 / 120px 100%,
    linear-gradient(to bottom, rgba(0,0,0,.15) 1px, transparent 1px) 0 calc(50% + 60px) / 100% 120px;
}
.object { grid-area: 1/1; position: relative; width: 211px; height: 151px; display: grid; place-items: center; background: #38b4e8; }
.object-logo { width: 37px; height: 47px; margin-right: 7px; margin-top: -3px; }
.overlay { position: absolute; left: -11px; top: -40px; width: 231px; height: 190px; overflow: visible; }
.object-tools { position: absolute; left: 221px; top: 0; display: grid; gap: 6px; color: #2f8bff; }
.object-tools button { width: 24px; height: 24px; border: 1px solid #2f8bff; background: #e8f1fe; }
.pill { position: absolute; right: 115px; top: 168px; width: 46px; height: 240px; padding: 12px 0; display: grid; border-radius: 23px; background: #fff; }
.pill .i { margin-right: 2px; }
.pill .on { color: var(--blue); }
.side-tab { position: absolute; right: 0; top: 227px; width: 17px; height: 92px; }
.fold-tab { position: absolute; left: calc(50% - 15px); bottom: 0; width: 91px; height: 16px; }
.side-tab svg, .fold-tab svg { width: 100%; height: 100%; }
.minimap { position: absolute; right: 0; bottom: 0; width: 70px; height: 39px; display: flex; gap: 12px; padding: 5px 4px 0 25px; background: #fff; }
.minimap span { width: 20px; height: 12px; margin-top: 9px; border: 1px solid #2f8bff; background: linear-gradient(to right, #38b4e8, #2f8bff) center / 6px 5px no-repeat; }
.minimap svg { width: 9px; height: 9px; }

/* library column */
.library { width: 51px; flex: none; padding: 23px 0 0; border: 1px solid var(--line); border-width: 0 1px; display: flex; flex-direction: column; }
.library a { position: relative; height: 50px; flex: none; display: flex; flex-direction: column; align-items: center; gap: 1px; white-space: nowrap; }
.library strong { font: 700 13px/15px Inter, sans-serif; }
.library .on { color: var(--blue); }
.library b { position: absolute; right: 4px; top: -4px; width: 8px; height: 8px; border-radius: 2px; background: #f9606c; color: #fff; font-size: 7px; line-height: 8px; text-align: center; }

/* properties */
.props { flex: none; width: 269px; display: flex; justify-content: space-between; padding: 20px 4px 0 15px; }
.props-body { width: 239px; overflow: hidden; }
.row { height: 32px; display: flex; gap: 10px; margin: 0 4px 10px 5px; }
.row.first { margin-top: -19px; }
.first .box { padding-top: 5px; }
.box { background: #f2f2f2; border-radius: 2px; }
.num { width: 86px; display: flex; justify-content: space-between; align-items: center; padding: 0 6px; }
.mini { width: 38px; }
.quick { gap: 0; justify-content: space-between; padding: 0 15px; }
.opacity { height: 31px; align-items: center; padding: 1px 20px 0 17px; gap: 9px; }
.opacity output { margin-left: 2px; width: 25px; }
.wide { flex: 1; gap: 4px; }
.big { width: 18px; }
input[type="range"] { appearance: none; height: 12px; width: 112px; background: linear-gradient(to right, var(--blue) 83%, #dcdee2 83%) center / 100% 2px no-repeat; }
input[type="range"]::-webkit-slider-thumb { appearance: none; width: 9px; height: 9px; border: 1px solid var(--blue); border-radius: 50%; background: #fff; }
.sections { margin-top: 14px; }
.sections button { width: 100%; height: 44px; padding: 0 2px; justify-content: flex-start; border-top: 1px solid var(--line); color: #111; }
.sections .i { margin-left: auto; color: #666a70; }
.sections span { margin-left: auto; color: var(--ink); padding-right: 11px; }
.sections span + .i { margin-left: 0; }
.scrollbar { width: 6px; margin-top: 125px; border-radius: 3px 3px 0 0; background: #bfbfbf; }

/* timeline */
.timeline { flex: none; height: 349px; display: flex; flex-direction: column; border-top: 1px solid #c8cace; }
.tl-bar { flex: none; height: 47px; display: flex; align-items: center; border-bottom: 1px solid var(--rule); border-left: 1px solid var(--rule); padding: 0 22px; }
.tl-tabs { display: flex; gap: 18px; }
.tl-tabs button { gap: 4px; }
.tl-tabs .i { width: 18px; }
.tl-tabs .on { color: var(--blue); }
.transport { display: flex; gap: 31px; margin-left: 213px; padding-top: 8px; }
.transport button:first-child .i { width: 18px; height: 18px; }
.tl-time { display: flex; gap: 19px; margin-left: 19px; font-size: 13px; color: #7a7e8c; white-space: nowrap; }
.stepper { display: flex; width: 119px; height: 23px; margin-left: 28px; border: 1px solid #d4d6da; border-radius: 4px; color: #70758a; }
.stepper button { width: 28px; font-size: 18px; }
.stepper input { width: 61px; text-align: center; font-weight: 700; border: 1px solid #d4d6da; border-width: 0 1px; }
.toggle { appearance: none; width: 31px; height: 16px; margin-left: 16px; border-radius: 8px; background: radial-gradient(circle at 8px 8px, #fff 6px, transparent 7px), #565a60; }
.tl-right { display: flex; align-items: center; gap: 15px; margin-left: auto; }
.tl-right i { margin-right: -4px; }
.tl-right input[type="range"] { width: 95px; margin: 0 -2px 0 -7px; background: linear-gradient(#dcdee2, #dcdee2) center / 100% 2px no-repeat; }
.tl-body { flex: 1; min-height: 0; display: grid; grid-template-columns: 206px 1fr 12px; border-bottom: 1px solid var(--rule); }
.heads { border-left: 1px solid var(--rule); border-right: 1px solid #c8cace; }
.head-tools { height: 30px; display: flex; gap: 18px; padding: 0 0 2px 13px; border-bottom: 1px solid var(--rule); }
.head-tools div { display: flex; gap: 9px; }
.head-tools div + div { gap: 12px; }
.slate { color: #7a84a0; }
.head, .track { height: 29px; background: #edeef2; border-bottom: 1px solid #d0d2d6; }
.head { display: flex; align-items: center; padding: 0 9px 0 11px; }
.head > .i:first-child { margin-right: 14px; }
.head span { flex: 1; color: #333; white-space: nowrap; }
.head .help { margin-right: 3px; }
.head em { width: 28px; height: 4px; background: radial-gradient(circle, #777 2px, transparent 2px); }
.heads .sel, .tracks .sel { background: #dce4ff; }
.tracks { position: relative; min-width: 0; border-right: 1px solid #c8cace; }
.ruler {
  height: 30px; display: flex; border-bottom: 1px solid var(--rule); overflow: hidden;
  font: 13px/17px "Liberation Serif", serif; color: #111;
  background:
    linear-gradient(to right, #ccc 1px, transparent 1px) -1px bottom / var(--sec) 10px repeat-x,
    linear-gradient(to right, #ccc 1px, transparent 1px) -1px bottom / 17px 5px repeat-x;
}
.ruler li { width: var(--sec); flex: none; text-align: center; }
.ruler li:first-child { width: 85px; text-align: left; padding-left: 4px; }
.ruler li:last-child { width: 85px; text-align: right; padding-right: 11px; }
.track { display: grid; grid-template-columns: repeat(100, 17px); grid-template-rows: 28px; align-items: center; overflow: hidden; }
.track > * { grid-row: 1; }
.clip { height: 24px; line-height: 22px; text-align: center; color: #fff; border: 1px solid #4888d4; border-radius: 2px; }
.clip.cam { background: #5a9ee8; }
.clip.in { background: linear-gradient(to bottom right, #6699cc 50%, #67b2e6 50%); border-color: #67b2e6; padding-left: 4px; }
.clip.out { background: linear-gradient(to top right, #67b2e6 50%, #6699cc 50%); border-color: #67b2e6; padding-left: 4px; }
.range { height: 28px; background: #feeedd; }
.key { width: 20px; height: 20px; justify-self: center; }
.playhead { position: absolute; left: calc(var(--t) * var(--sec) - 1px); top: 28px; bottom: -16px; width: 1px; background: #f00000; }
.playhead svg { position: absolute; left: -8px; top: -21px; width: 17px; height: 22px; }
.gutter { margin-top: 29px; border-right: 1px solid #c8cace; }
.status { flex: none; height: 15px; padding: 2px 0 0 1px; overflow: hidden; background: linear-gradient(#c8cace, #c8cace) 205px 0 / 1px 100% no-repeat; }
.status span { margin-left: 13px; }

/* floating items */
.arrow { position: absolute; left: 1270px; top: 379px; width: 400px; height: 50px; filter: drop-shadow(2px 3px 3px rgba(0,0,0,.6)); }
.cursor { position: absolute; left: 1786px; top: 474px; width: 13px; height: 20px; }
.ime { position: absolute; left: 1584px; bottom: 1px; width: 62px; height: 26px; display: flex; align-items: center; justify-content: center; gap: 4px; border: 1px solid #888; border-radius: 5px; background: #fff; color: #222; box-shadow: 0 0 3px rgba(0,0,0,.5); }
.ime svg { width: 12px; height: 14px; }
.watermark { position: absolute; right: 11px; bottom: 9px; display: flex; }
.watermark svg { width: 46px; height: 40px; margin-right: -2px; }
.watermark div { display: grid; }
.watermark strong { font-size: 21px; line-height: 22px; color: #6ca3dc; }
.watermark span { font: 700 16px/18px "Liberation Sans", sans-serif; color: #72cc8c; }
```
